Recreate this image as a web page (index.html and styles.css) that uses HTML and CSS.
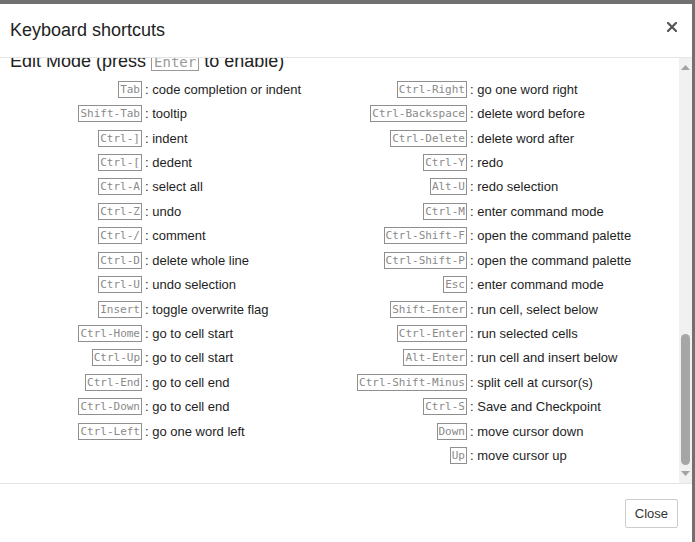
FILE: index.html
```html
<!DOCTYPE html>
<html>
<head>
<meta charset="utf-8">
<link rel="stylesheet" href="styles.css">
</head>
<body>
<div class="backdrop-top"></div>
<div class="modal">
  <div class="modal-header">
    <h4 class="modal-title">Keyboard shortcuts</h4>
    <span class="close-x">
      <svg width="10" height="10" viewBox="0 0 10 10"><path d="M1 1 L9 9 M9 1 L1 9" stroke="#555" stroke-width="2.2" stroke-linecap="square"/></svg>
    </span>
  </div>
  <div class="modal-body">
    <div class="scroll-content">
      <h4 class="section-title">Edit Mode (press <kbd class="kbd-big">Enter</kbd> to enable)</h4>
      <div class="shortcuts">
        <div class="col col-left">
          <div class="row"><span class="key"><kbd>Tab</kbd></span><span class="descr">: code completion or indent</span></div>
          <div class="row"><span class="key"><kbd>Shift-Tab</kbd></span><span class="descr">: tooltip</span></div>
          <div class="row"><span class="key"><kbd>Ctrl-]</kbd></span><span class="descr">: indent</span></div>
          <div class="row"><span class="key"><kbd>Ctrl-[</kbd></span><span class="descr">: dedent</span></div>
          <div class="row"><span class="key"><kbd>Ctrl-A</kbd></span><span class="descr">: select all</span></div>
          <div class="row"><span class="key"><kbd>Ctrl-Z</kbd></span><span class="descr">: undo</span></div>
          <div class="row"><span class="key"><kbd>Ctrl-/</kbd></span><span class="descr">: comment</span></div>
          <div class="row"><span class="key"><kbd>Ctrl-D</kbd></span><span class="descr">: delete whole line</span></div>
          <div class="row"><span class="key"><kbd>Ctrl-U</kbd></span><span class="descr">: undo selection</span></div>
          <div class="row"><span class="key"><kbd>Insert</kbd></span><span class="descr">: toggle overwrite flag</span></div>
          <div class="row"><span class="key"><kbd>Ctrl-Home</kbd></span><span class="descr">: go to cell start</span></div>
          <div class="row"><span class="key"><kbd>Ctrl-Up</kbd></span><span class="descr">: go to cell start</span></div>
          <div class="row"><span class="key"><kbd>Ctrl-End</kbd></span><span class="descr">: go to cell end</span></div>
          <div class="row"><span class="key"><kbd>Ctrl-Down</kbd></span><span class="descr">: go to cell end</span></div>
          <div class="row"><span class="key"><kbd>Ctrl-Left</kbd></span><span class="descr">: go one word left</span></div>
        </div>
        <div class="col col-right">
          <div class="row"><span class="key"><kbd>Ctrl-Right</kbd></span><span class="descr">: go one word right</span></div>
          <div class="row"><span class="key"><kbd>Ctrl-Backspace</kbd></span><span class="descr">: delete word before</span></div>
          <div class="row"><span class="key"><kbd>Ctrl-Delete</kbd></span><span class="descr">: delete word after</span></div>
          <div class="row"><span class="key"><kbd>Ctrl-Y</kbd></span><span class="descr">: redo</span></div>
          <div class="row"><span class="key"><kbd>Alt-U</kbd></span><span class="descr">: redo selection</span></div>
          <div class="row"><span class="key"><kbd>Ctrl-M</kbd></span><span class="descr">: enter command mode</span></div>
          <div class="row"><span class="key"><kbd>Ctrl-Shift-F</kbd></span><span class="descr">: open the command palette</span></div>
          <div class="row"><span class="key"><kbd>Ctrl-Shift-P</kbd></span><span class="descr">: open the command palette</span></div>
          <div class="row"><span class="key"><kbd>Esc</kbd></span><span class="descr">: enter command mode</span></div>
          <div class="row"><span class="key"><kbd>Shift-Enter</kbd></span><span class="descr">: run cell, select below</span></div>
          <div class="row"><span class="key"><kbd>Ctrl-Enter</kbd></span><span class="descr">: run selected cells</span></div>
          <div class="row"><span class="key"><kbd>Alt-Enter</kbd></span><span class="descr">: run cell and insert below</span></div>
          <div class="row"><span class="key"><kbd>Ctrl-Shift-Minus</kbd></span><span class="descr">: split cell at cursor(s)</span></div>
          <div class="row"><span class="key"><kbd>Ctrl-S</kbd></span><span class="descr">: Save and Checkpoint</span></div>
          <div class="row"><span class="key"><kbd>Down</kbd></span><span class="descr">: move cursor down</span></div>
          <div class="row"><span class="key"><kbd>Up</kbd></span><span class="descr">: move cursor up</span></div>
        </div>
      </div>
    </div>
    <div class="scrollbar">
      <svg class="arrow" width="9" height="5" viewBox="0 0 9 5"><path d="M0 5 L4.5 0 L9 5 Z" fill="#a3a3a3"/></svg>
      <div class="track-space"></div>
      <div class="thumb"></div>
      <svg class="arrow arrow-down" width="9" height="5" viewBox="0 0 9 5"><path d="M0 0 L9 0 L4.5 5 Z" fill="#a3a3a3"/></svg>
    </div>
  </div>
  <div class="modal-footer">
    <button class="btn">Close</button>
  </div>
</div>
</body>
</html>
```
FILE: styles.css
```css
html, body {
  margin: 0;
  padding: 0;
}
body {
  background: #717171;
  width: 695px;
  height: 542px;
  overflow: hidden;
  font-family: "Liberation Sans", Arial, sans-serif;
  color: #222;
}
.backdrop-top {
  height: 4px;
}
.modal {
  width: 692px;
  height: 538px;
  background: #fff;
  display: flex;
  flex-direction: column;
}
.modal-header {
  height: 54px;
  box-sizing: border-box;
  padding: 16px 15px 0 10px;
  border-bottom: 1px solid #e5e5e5;
  display: flex;
  justify-content: space-between;
  align-items: flex-start;
  flex: none;
}
.modal-title {
  margin: 0;
  font-size: 18px;
  line-height: 20px;
  font-weight: normal;
  color: #222;
}
.close-x {
  display: flex;
  margin-top: 2px;
}
.modal-body {
  height: 425px;
  display: flex;
  flex: none;
}
.scroll-content {
  flex: 1;
  overflow: hidden;
}
.section-title {
  margin: -7px 0 6px 0;
  padding-left: 10px;
  font-size: 18px;
  line-height: 20px;
  font-weight: normal;
  color: #222;
  white-space: nowrap;
}
.kbd-big {
  display: inline-block;
  font-family: "DejaVu Sans Mono", monospace;
  font-size: 14px;
  line-height: 16px;
  color: #999;
  border: 1px solid #999;
  padding: 0 2px;
}
.shortcuts {
  display: grid;
  grid-template-columns: 325px 1fr;
}
.col {
  display: flex;
  flex-direction: column;
}
.row {
  height: 24.43px;
  display: flex;
  align-items: center;
  font-size: 13px;
  white-space: nowrap;
}
.key {
  width: 142px;
  flex: none;
  display: flex;
  justify-content: flex-end;
}
kbd {
  display: inline-block;
  font-family: "DejaVu Sans Mono", monospace;
  font-size: 11px;
  line-height: 15px;
  color: #8a8a8a;
  border: 1px solid #8f8f8f;
  padding: 0 1px;
}
.descr {
  padding-left: 3px;
  color: #1e1e1e;
}
.scrollbar {
  width: 13px;
  flex: none;
  background: #f1f1f1;
  display: flex;
  flex-direction: column;
  align-items: center;
  padding: 7px 0 7px 0;
  box-sizing: border-box;
}
.arrow {
  flex: none;
  display: block;
}
.track-space {
  height: 264px;
  flex: none;
}
.thumb {
  width: 9px;
  height: 131px;
  border-radius: 5px;
  background: #a6a6a6;
  flex: none;
}
.arrow-down {
  margin-top: 6px;
}
.modal-footer {
  border-top: 1px solid #e5e5e5;
  padding: 15px 14px 15px 15px;
  display: flex;
  justify-content: flex-end;
  flex: 1;
}
.btn {
  height: 29px;
  padding: 0 9px;
  font-family: "Liberation Sans", Arial, sans-serif;
  font-size: 13px;
  color: #333;
  background: #fff;
  border: 1px solid #ccc;
  border-radius: 2px;
}
```
